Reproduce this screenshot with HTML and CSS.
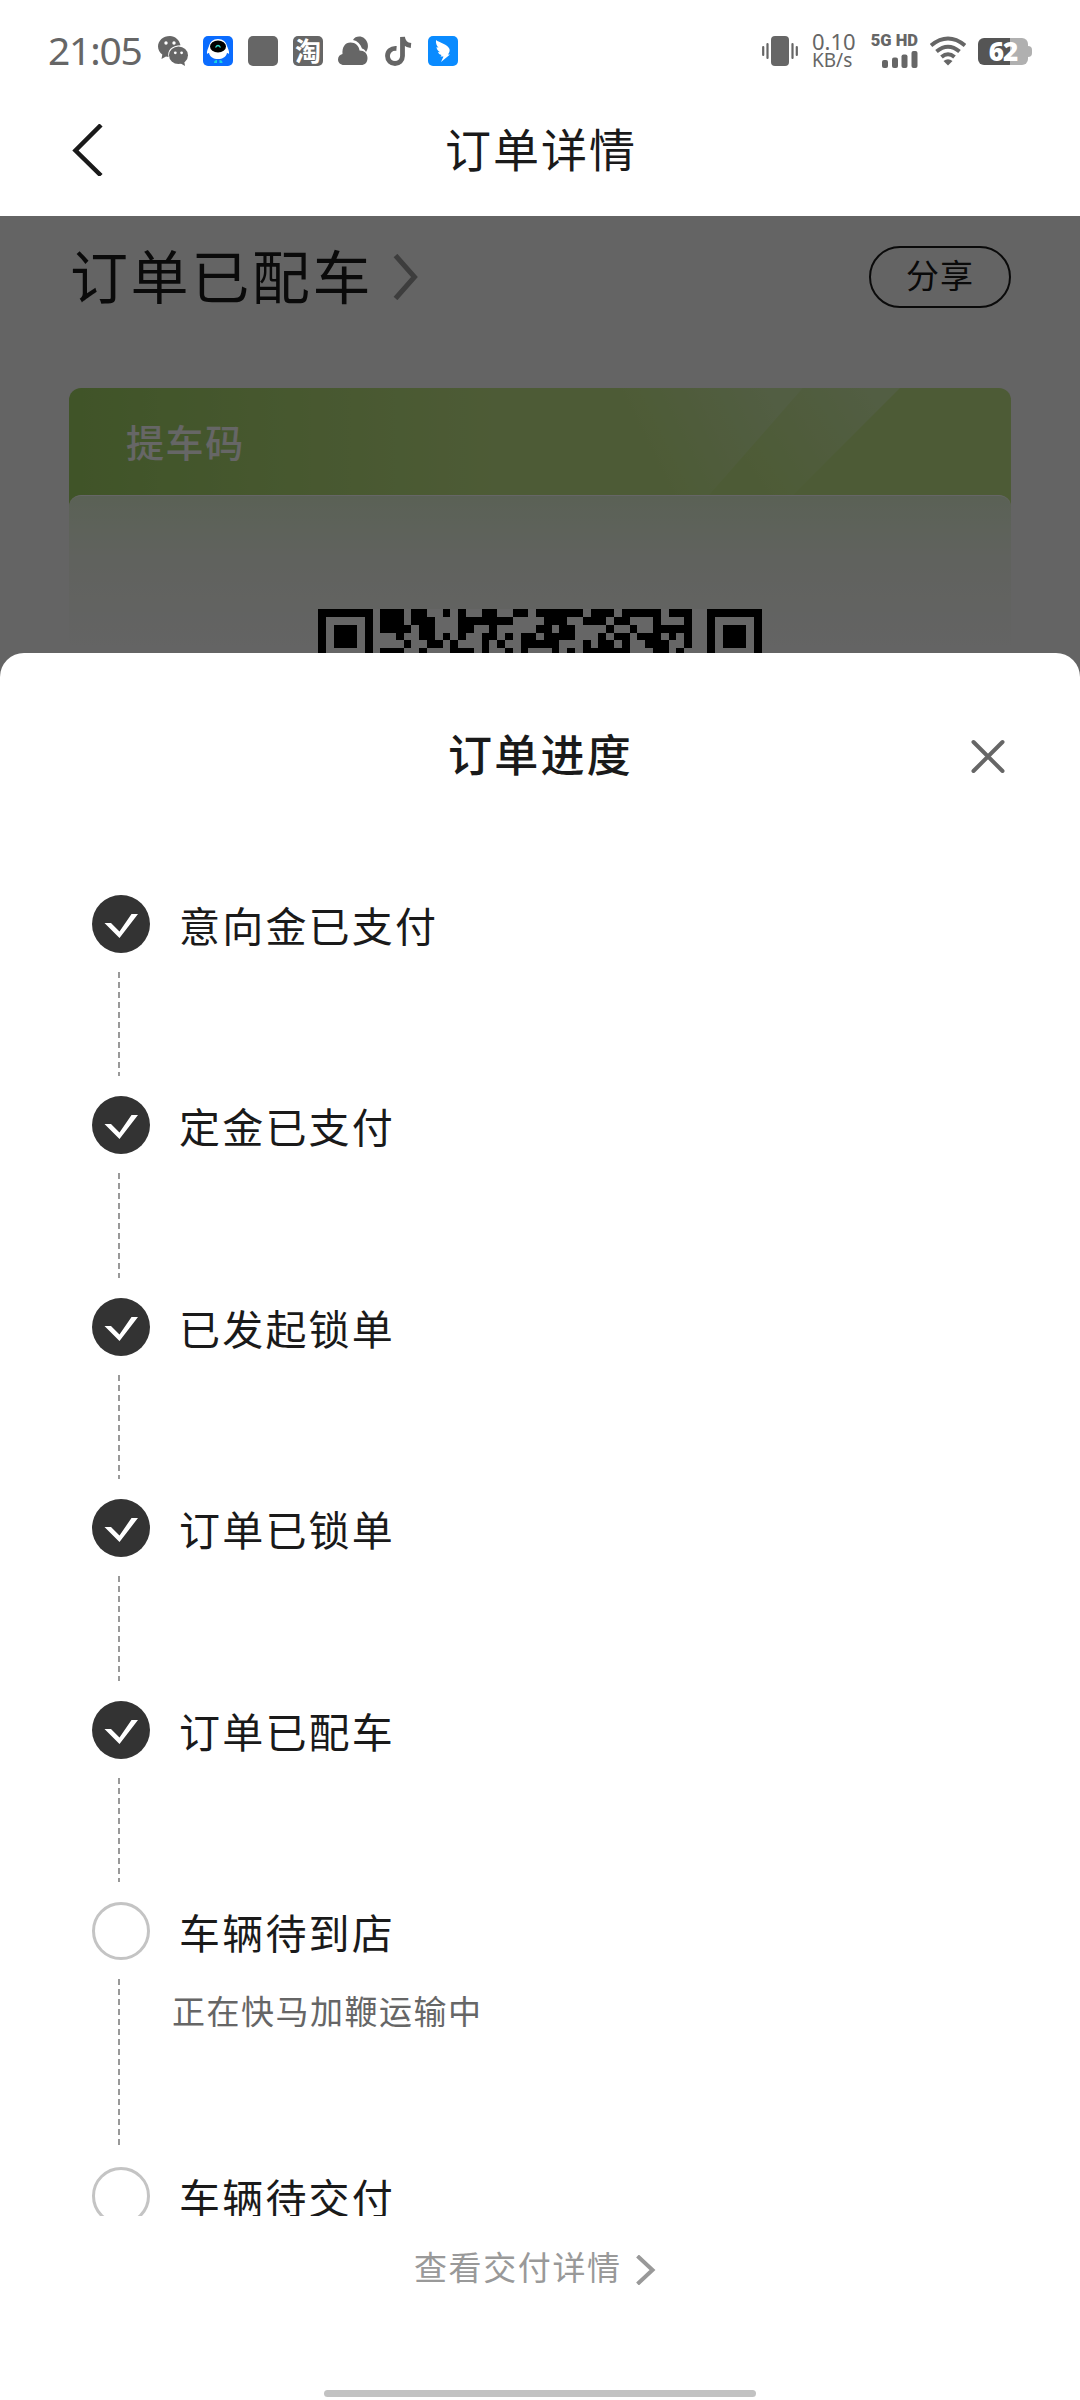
FILE: index.html
```
<!DOCTYPE html>
<html lang="zh-CN">
<head>
  <meta charset="UTF-8">
  <title>订单详情</title>
  <link rel="stylesheet" href="styles.css">
</head>
<body>
  <div class="status-bar">
    <span class="time">21:05</span>
    <div class="app-icons">
      <svg width="30" height="30" viewBox="0 0 30 30">
        <path fill="#666" d="M12 0C5 0 0 4.700 0 10.500c0 3.300 1.700 6.100 4.300 8L3.500 23l4.500-2.500c1 .3 1.600.4 2.500.4C9 14 14 9.500 22.500 9.300 21.500 4 17 0 12 0z"/>
        <ellipse cx="20.500" cy="19.300" rx="9.500" ry="8.800" fill="#666"/>
        <path fill="#666" d="M22 27l5 3-.8-5z"/>
        <g fill="#fff"><circle cx="8" cy="7" r="1.700"/><circle cx="16" cy="7" r="1.700"/><circle cx="17.300" cy="16.800" r="1.400"/><circle cx="23.600" cy="16.800" r="1.400"/></g>
      </svg>
      <svg width="30" height="30" viewBox="0 0 30 30">
        <rect width="30" height="30" rx="5" fill="#0a6cff"/>
        <path fill="#fff" d="M15 3c5 0 8 3 9 7 1 3 2.500 5 2 8-1-1-1.500-1-2-1-1 4-4.500 6-9 6s-8-2-9-6c-.5 0-1 0-2 1-.5-3 1-5 2-8 1-4 4-7 9-7z"/>
        <ellipse cx="15" cy="10.500" rx="8" ry="6" fill="#000"/>
        <path d="M12.500 11.500q2.500-4 5 0" fill="none" stroke="#2fd6c8" stroke-width="1.300"/>
        <path d="M11 27c0-2 1-3 3-3v3zM16.500 24c2 0 3 1 3 3h-3z" fill="#19d3e0"/>
      </svg>
      <svg width="30" height="30"><rect width="30" height="30" rx="5" fill="#666"/></svg>
      <span class="tao">淘</span>
      <svg width="30" height="30" viewBox="0 0 30 30">
        <path fill="#666" d="M15 4c2-4 8-4.500 11.500-1.500 4 3.500 4.500 9 1.500 13.500-1-2-2-3-4-3.500C22.500 8 19.500 5 15 4z"/>
        <path fill="#666" d="M6 29C2.500 29 0 26.500 0 23.500c0-3 2-5 4.500-5.500C4 11 7 6.500 12.500 6.500c5 0 8.500 3.500 9 8 5 0 8 3 8 7.500S27 29 23 29z"/>
      </svg>
      <svg class="tiktok" width="27" height="30" viewBox="0 0 27 30">
        <path d="M11.500 12.500C6 12 2.500 15.500 2.500 20s3.500 7.500 7.500 7.500 7.500-3 7.500-7.500V1c.5 5 3.500 8 8.500 8.500" fill="none" stroke="#666" stroke-width="4.800"/>
      </svg>
      <svg width="30" height="30" viewBox="0 0 30 30">
        <rect width="30" height="30" rx="5" fill="#0a8bff"/>
        <path fill="#fff" d="M8 4c3 2.500 12 4.500 13.500 9 .6 2-.5 4-1.500 5.500h2L13 26l2.500-5.500h-3l1-1.500c-2-.3-3-1.500-3.500-3l2 .2C9.500 14.500 8.700 13 8.500 11l2 .8C8.500 9.500 7.700 7 8 4z"/>
      </svg>
    </div>
    <div class="system-icons">
      <svg width="36" height="30" viewBox="0 0 36 30">
        <rect x="9" width="18" height="30" rx="4" fill="#666"/>
        <path d="M1.200 11v8M5.500 8v14M30.500 8v14M34.800 11v8" stroke="#666" stroke-width="2.200" stroke-linecap="round"/>
      </svg>
      <div class="speed"><span>0.10</span><span class="unit">KB/s</span></div>
      <div class="signal">
        <span>5G HD</span>
        <svg width="36" height="17" viewBox="0 0 36 17" fill="#666">
          <rect x="0" y="9" width="6" height="8" rx="2"/><rect x="10" y="6.500" width="6" height="10.500" rx="2"/><rect x="19.500" y="3.500" width="6" height="13.500" rx="2"/><rect x="29.500" y="0" width="6" height="17" rx="2"/>
        </svg>
      </div>
      <svg class="wifi" width="36" height="30" viewBox="0 0 36 30">
        <path d="M1 9.500q17-14 34 0M6.500 15.500q11.500-9.500 23 0M11.500 21q6.500-5.500 13 0" fill="none" stroke="#666" stroke-width="4"/>
        <path d="M13.500 25q4.500-3.500 9 0L18 29.500z" fill="#666"/>
      </svg>
      <div class="battery"><span>62</span></div>
    </div>
  </div>

  <div class="nav-bar">
    <svg width="34" height="52" viewBox="0 0 34 52"><path d="M31 1L5.500 26.500 31 51.500" fill="none" stroke="#1a1a1a" stroke-width="4.500"/></svg>
    <h1>订单详情</h1>
  </div>

  <div class="order">
    <div class="order-head">
      <h2>订单已配车</h2>
      <svg width="26" height="46" viewBox="0 0 26 46"><path d="M2.500 1.500L21.500 23 2.500 44.500" fill="none" stroke="#999" stroke-width="5"/></svg>
      <span class="share">分享</span>
    </div>
    <div class="pickup-card">
      <div class="pickup-title">
        <svg class="rays" width="400" height="107" viewBox="0 0 400 107">
          <defs>
            <linearGradient id="ray1" gradientUnits="userSpaceOnUse" x1="50" y1="60" x2="170" y2="0">
              <stop offset="0" stop-color="#d4eebd" stop-opacity="0"/>
              <stop offset="1" stop-color="#d4eebd" stop-opacity=".6"/>
            </linearGradient>
            <linearGradient id="ray2" gradientUnits="userSpaceOnUse" x1="150" y1="80" x2="270" y2="0">
              <stop offset="0" stop-color="#d4eebd" stop-opacity="0"/>
              <stop offset="1" stop-color="#d4eebd" stop-opacity=".6"/>
            </linearGradient>
          </defs>
          <path d="M0 0h206L112 107H0z" fill="url(#ray1)"/>
          <path d="M206 0h97L196 107h-84z" fill="url(#ray2)"/>
        </svg>
        <span>提车码</span>
      </div>
      <div class="pickup-body">
        <svg class="qr" width="444" height="47" viewBox="0 0 57 6" preserveAspectRatio="none" shape-rendering="crispEdges">
          <rect width="57" height="6" fill="#fff"/>
          <path d="M0 0h7v6h-1v-5h-5v5h-1zM2 2h3v3h-3zM50 0h7v6h-1v-5h-5v5h-1zM52 2h3v3h-3z"/>
          <g transform="translate(8 .5)" stroke="#000" stroke-width="1">
            <path d="M0 0h3M4 0h2M8 0h1M10 0h1M13 0h2M17 0h2M20 0h6M27 0h3M31 0h5M37 0h3"/>
            <path d="M0 1h3M4 1h3M10 1h7M21 1h3M26 1h3M30 1h2M35 1h1M39 1h1"/>
            <path d="M0 2h4M5 2h2M10 2h2M14 2h1M20 2h2M23 2h2M29 2h1M32 2h1M35 2h5"/>
            <path d="M2 3h1M5 3h2M8 3h1M10 3h1M13 3h2M16 3h1M18 3h2M21 3h4M28 3h1M30 3h2M33 3h3M37 3h1M39 3h1"/>
            <path d="M3 4h1M6 4h2M9 4h1M13 4h1M15 4h1M18 4h5M26 4h1M28 4h2M31 4h1M34 4h3M39 4h1"/>
            <path d="M0 5h3M5 5h1M9 5h3M13 5h1M16 5h1M18 5h1M22 5h1M24 5h1M26 5h6M35 5h2M38 5h1"/>
          </g>
        </svg>
      </div>
    </div>
  </div>

  <div class="sheet">
    <div class="sheet-head">
      <h2>订单进度</h2>
      <svg class="close" width="34" height="34" viewBox="0 0 34 34"><path d="M2.500 3l29 29M31.500 3L2.500 32" stroke="#666" stroke-width="4" stroke-linecap="round"/></svg>
    </div>

    <ul class="steps">
      <li class="step done">
        <div class="marker"><svg width="58" height="58" viewBox="0 0 58 58"><path d="M12.500 28H19l8.500 8.500L39.500 19H46L27.500 43z"/></svg></div>
        <div class="label">意向金已支付</div>
      </li>
      <li class="step done">
        <div class="marker"><svg width="58" height="58" viewBox="0 0 58 58"><path d="M12.500 28H19l8.500 8.500L39.500 19H46L27.500 43z"/></svg></div>
        <div class="label">定金已支付</div>
      </li>
      <li class="step done">
        <div class="marker"><svg width="58" height="58" viewBox="0 0 58 58"><path d="M12.500 28H19l8.500 8.500L39.500 19H46L27.500 43z"/></svg></div>
        <div class="label">已发起锁单</div>
      </li>
      <li class="step done">
        <div class="marker"><svg width="58" height="58" viewBox="0 0 58 58"><path d="M12.500 28H19l8.500 8.500L39.500 19H46L27.500 43z"/></svg></div>
        <div class="label">订单已锁单</div>
      </li>
      <li class="step done">
        <div class="marker"><svg width="58" height="58" viewBox="0 0 58 58"><path d="M12.500 28H19l8.500 8.500L39.500 19H46L27.500 43z"/></svg></div>
        <div class="label">订单已配车</div>
      </li>
      <li class="step tall">
        <div class="marker"><i></i></div>
        <div class="label">车辆待到店<p>正在快马加鞭运输中</p></div>
      </li>
      <li class="step">
        <div class="marker"><i></i></div>
        <div class="label">车辆待交付</div>
      </li>
    </ul>

    <div class="more">
      <span>查看交付详情</span>
      <svg width="20" height="30" viewBox="0 0 20 30"><path d="M1.500 1L16.500 15 1.500 29" fill="none" stroke="#999" stroke-width="4"/></svg>
    </div>
    <div class="home-bar"></div>
  </div>
</body>
</html>
```
FILE: styles.css
```
* {
  box-sizing: border-box;
}
body {
  margin: 0;
  width: 1080px;
  height: 2400px;
  overflow: hidden;
  display: flex;
  flex-direction: column;
  font-family: "Noto Sans CJK SC", sans-serif;
  color: #1a1a1a;
  background: #fff;
}
h1, h2, p, ul {
  margin: 0;
  padding: 0;
  font-weight: 400;
}
svg {
  display: block;
  flex: none;
}

/* status bar */
.status-bar {
  height: 102px;
  flex: none;
  display: flex;
  align-items: center;
  padding: 0 48px 0 48px;
  color: #666;
}
.time {
  width: 110px;
  padding-bottom: 2px;
  font: 39px/40px "Noto Sans", sans-serif;
  letter-spacing: -1.200px;
}
.app-icons {
  display: flex;
  gap: 15px;
}
.tao {
  width: 30px;
  height: 30px;
  border-radius: 5px;
  background: #666;
  color: #fff;
  font-size: 26px;
  font-weight: 700;
  line-height: 28px;
  text-align: center;
}
.tiktok {
  margin: 0 1px 0 2px;
}
.system-icons {
  display: flex;
  align-items: center;
  margin-left: auto;
}
.speed {
  width: 44px;
  margin: 0 14px;
  display: flex;
  flex-direction: column;
  font: 22px/19px "Noto Sans", sans-serif;
  white-space: nowrap;
}
.speed .unit {
  font-size: 19px;
}
.signal {
  width: 48px;
  display: flex;
  flex-direction: column;
  align-items: flex-end;
  gap: 3px;
  font: 900 16.500px/14px Roboto, sans-serif;
  white-space: nowrap;
}
.wifi {
  margin: 0 12px;
}
.battery {
  width: 50px;
  height: 27px;
  margin-right: 4px;
  border-radius: 6px;
  background: linear-gradient(90deg, #555 0 32px, #b0b0b0 32px);
  position: relative;
  color: #fff;
  font: 800 26px/26px "Open Sans", sans-serif;
  letter-spacing: -1px;
  text-align: center;
}
.battery::after {
  content: "";
  position: absolute;
  right: -4px;
  top: 8px;
  width: 4px;
  height: 11px;
  border-radius: 0 4px 4px 0;
  background: #b0b0b0;
}

/* nav bar */
.nav-bar {
  height: 114px;
  flex: none;
  display: flex;
  align-items: center;
  padding: 0 70px 18px;
}
.nav-bar h1 {
  flex: 1;
  padding: 0 32px 7px 0;
  text-align: center;
  font-size: 46px;
  line-height: 60px;
  letter-spacing: 2px;
}

/* order page, dimmed under the sheet */
.order {
  height: 462px;
  flex: none;
  position: relative;
  overflow: hidden;
  padding: 30px 69px 0;
  background: #f9f9f9;
}
.order::after {
  content: "";
  position: absolute;
  inset: 0;
  background: rgba(0, 0, 0, 0.6);
}
.order-head {
  height: 62px;
  display: flex;
  align-items: center;
}
.order-head h2 {
  margin: 0 20px 0 1px;
  padding-bottom: 7px;
  font-size: 58px;
  line-height: 62px;
  letter-spacing: 2.600px;
}
.share {
  width: 142px;
  height: 62px;
  margin-left: auto;
  border: 2px solid #1a1a1a;
  border-radius: 31px;
  font-size: 33px;
  line-height: 53px;
  letter-spacing: 1px;
  text-align: center;
}
.pickup-card {
  height: 400px;
  margin-top: 80px;
  border-radius: 12px;
  background: linear-gradient(90deg, #a0d264, #c1e487 45%, #c1e487);
}
.pickup-title {
  height: 107px;
  display: flex;
  align-items: center;
  padding: 0 57px 3px;
  position: relative;
  color: #fff;
  font-size: 38px;
  font-weight: 500;
  letter-spacing: 1.600px;
}
.rays {
  position: absolute;
  top: 0;
  left: 528px;
}
.pickup-body {
  height: 293px;
  padding: 113px 0 0 249px;
  border-top: 1px solid #fff;
  border-radius: 12px 12px 0 0;
  background: linear-gradient(#e2f3d6, #f0f5ea 60px, #f9f9f9 150px);
}

/* progress sheet */
.sheet {
  flex: 1;
  margin-top: -25px;
  position: relative;
  z-index: 1;
  display: flex;
  flex-direction: column;
  border-radius: 24px 24px 0 0;
  background: #fff;
}
.sheet-head {
  height: 206px;
  flex: none;
  display: flex;
  align-items: center;
  padding: 0 75px 0 110px;
}
.sheet-head h2 {
  flex: 1;
  padding-bottom: 6px;
  text-align: center;
  font-size: 44px;
  font-weight: 500;
  letter-spacing: 2.200px;
}
.steps {
  height: 1357px;
  padding: 35.500px 92px 0;
  flex: none;
  overflow: hidden;
  list-style: none;
}
.step {
  height: 201.600px;
  display: flex;
  gap: 29px;
}
.step.tall {
  height: 265px;
}
.marker {
  width: 58px;
  display: flex;
  flex-direction: column;
}
.marker svg,
.marker i {
  width: 58px;
  height: 58px;
  flex: none;
  border-radius: 50%;
}
.marker svg {
  background: #333;
  fill: #fff;
}
.marker i {
  border: 3px solid #c4c4c4;
}
.marker::after {
  content: "";
  flex: 1;
  width: 2px;
  margin: 19px 0 20px 26px;
  background: repeating-linear-gradient(#999 0 6px, transparent 6px 10px);
}
.label {
  font-size: 41px;
  line-height: 58px;
  letter-spacing: 2.200px;
}
.label p {
  margin: 26px 0 0 -7px;
  font-size: 33px;
  line-height: 48px;
  letter-spacing: 1.500px;
  color: #666;
}
.more {
  height: 174px;
  display: flex;
  padding: 26px 0 0 414px;
  font-size: 33px;
  line-height: 48px;
  letter-spacing: 1.600px;
  color: #999;
}
.more svg {
  margin: 13px 0 0 14px;
}
.home-bar {
  width: 432px;
  height: 7px;
  margin: 0 auto;
  border-radius: 4px;
  background: #c2c2c2;
}
```
